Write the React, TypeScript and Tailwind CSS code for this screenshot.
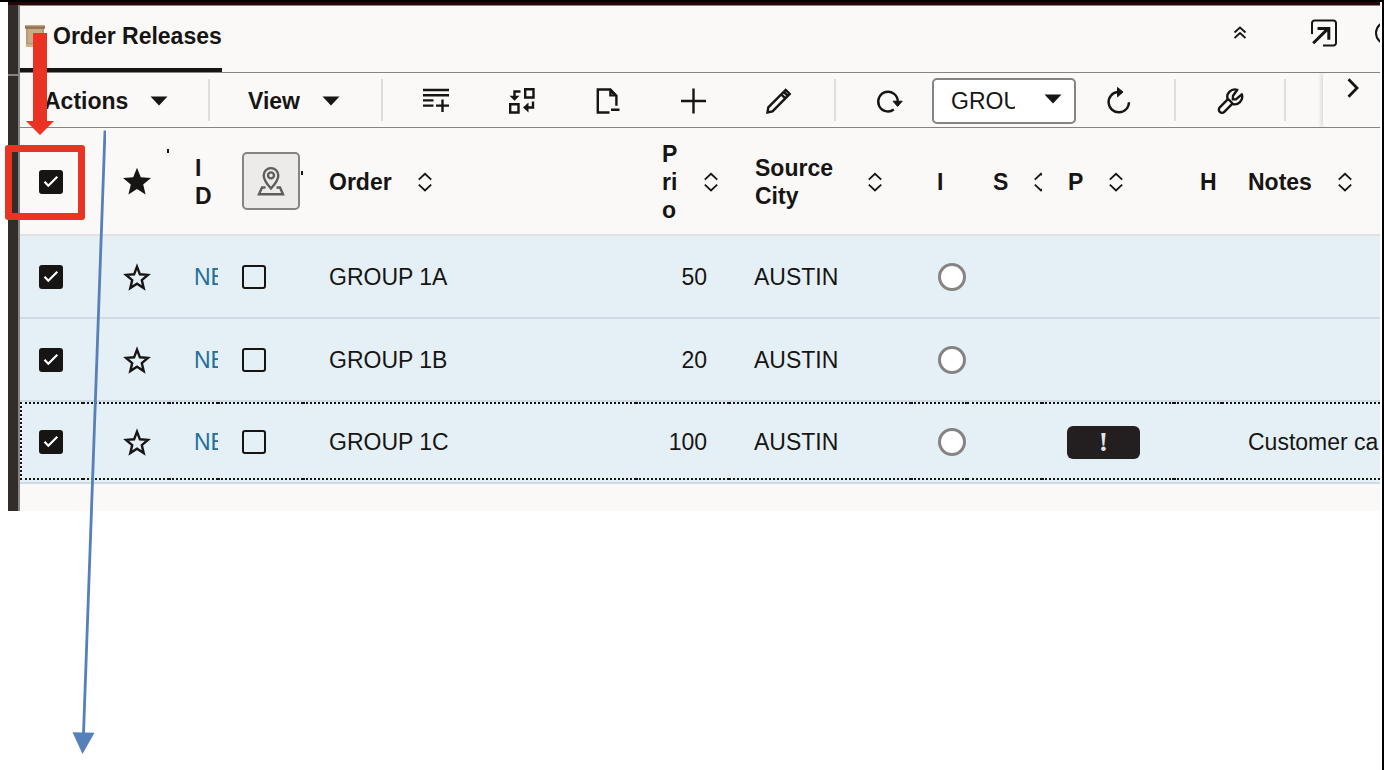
import type { ReactNode } from "react";

const INK = "#161513";

function Check({ label, checked = false }: { label: string; checked?: boolean }) {
  return (
    <label className="inline-grid place-items-center">
      <input
        type="checkbox"
        aria-label={label}
        defaultChecked={checked}
        className="peer col-start-1 row-start-1 size-6 appearance-none rounded-[3px] border-2 border-[#161513] checked:bg-[#161513]"
      />
      <svg
        viewBox="0 0 24 24"
        className="pointer-events-none col-start-1 row-start-1 hidden size-6 peer-checked:block"
        fill="none"
        stroke="#fff"
        strokeWidth="2.2"
      >
        <path d="M5.500 11.800l3.800 3.900 9-8.900" />
      </svg>
    </label>
  );
}

const STAR =
  "M14 .8l3.8 9.5 10.2.8-7.8 6.5 2.4 9.9-8.6-5.4-8.6 5.4 2.4-9.9L0 11.1l10.2-.8z";

function StarFilled() {
  return (
    <svg viewBox="0 0 28 28" className="size-7" fill={INK}>
      <path d={STAR} />
    </svg>
  );
}

function StarOutline() {
  return (
    <svg viewBox="0 0 28 28" className="size-7" fill="none" stroke={INK} strokeWidth="2.4">
      <path d="M14 3.600l2.900 7.700 8 .600-6.100 5.200 1.900 8-6.700-4.300-6.700 4.300 1.900-8-6.100-5.200 8-.600z" />
    </svg>
  );
}

function Sort() {
  return (
    <svg viewBox="0 0 14 20" className="h-5 w-[14px] shrink-0" fill="none" stroke={INK} strokeWidth="1.8">
      <path d="M.8 7.600L7 1.800l6.200 5.800M.8 12.600L7 18.400l6.200-5.800" />
    </svg>
  );
}

function Caret() {
  return (
    <svg viewBox="0 0 18 10" className="h-[10px] w-[18px]" fill={INK}>
      <path d="M.5.5h17L9 9.500z" />
    </svg>
  );
}

function Icon({ children, width = 2.4 }: { children: ReactNode; width?: number }) {
  return (
    <svg viewBox="0 0 28 28" className="size-7" fill="none" stroke={INK} strokeWidth={width}>
      {children}
    </svg>
  );
}

function ToolButton({ label, children }: { label: string; children: ReactNode }) {
  return (
    <button aria-label={label} className="flex h-full w-[86px] items-center justify-center">
      {children}
    </button>
  );
}

function Group({ className, children }: { className: string; children: ReactNode }) {
  return (
    <div className={`flex h-[42px] shrink-0 items-center border-r-2 border-[#e0dedc] ${className}`}>
      {children}
    </div>
  );
}

function Head({ text, box = "", sort = false }: { text: string; box?: string; sort?: boolean }) {
  return (
    <th scope="col" className="border-b-2 border-[#e3e1df] p-0 text-left font-bold">
      <div className="flex items-center gap-[26px] overflow-hidden pt-[1px] pl-[26px]">
        <span className={`shrink-0 leading-7 ${box}`}>{text}</span>
        {sort && <Sort />}
      </div>
    </th>
  );
}

function Cell({
  focused,
  first = false,
  className = "",
  children,
}: {
  focused: boolean;
  first?: boolean;
  className?: string;
  children?: ReactNode;
}) {
  const focus = focused
    ? `h-[78px] mb-[2px] border-y-2 border-dotted border-[#161513] pt-[2px] ${first ? "border-l-2" : ""}`
    : "h-[81px]";
  return (
    <td className="border-b-2 border-[#cfdae2] p-0 align-top">
      <div className={`flex items-center overflow-hidden whitespace-nowrap ${focus} ${className}`}>
        {children}
      </div>
    </td>
  );
}

const rows = [
  { order: "GROUP 1A", priority: 50, city: "AUSTIN", alert: false, notes: "" },
  { order: "GROUP 1B", priority: 20, city: "AUSTIN", alert: false, notes: "" },
  { order: "GROUP 1C", priority: 100, city: "AUSTIN", alert: true, notes: "Customer ca" },
];

function Toolbar() {
  return (
    <div
      role="toolbar"
      className="flex h-[55px] items-center overflow-hidden border-b border-[#868482]"
    >
      <Group className="w-[190px] pt-[2px] pl-6">
        <button className="flex items-center gap-[22px] font-bold">
          Actions <Caret />
        </button>
      </Group>
      <Group className="w-[173px] pt-[2px] pl-[38px]">
        <button className="flex items-center gap-[22px] font-bold">
          View <Caret />
        </button>
      </Group>
      <Group className="w-[453px] pt-[2px] pl-[10px]">
        <ToolButton label="Add row">
          <Icon>
            <path d="M1 3h26M1 8.200h26M1 13.400h10.500M1 18.600h10.500M14 18.600h13M20.500 12.400v12.500" />
          </Icon>
        </ToolButton>
        <ToolButton label="Swap values">
          <Icon>
            <path d="M17.200 2.200h8.300v8.300h-8.300zM2.200 17.200h8.300v8.300H2.200zM12.500 4.500H6.500v6" />
            <path d="M1.500 8.800h10l-5 5zM20.500 15.500v10l-5.500-5z" fill={INK} stroke="none" />
            <path d="M25 14.500v6h-6" />
          </Icon>
        </ToolButton>
        <ToolButton label="Remove page">
          <Icon>
            <path d="M15.500 25.500H3.800V2.500h12.600l6 6.200v10M17 22.800h8.500" />
            <path d="M15.200 1.500l8 8h-8zM17.600 6.300v1.200h1.300z" fill={INK} fillRule="evenodd" stroke="none" />
          </Icon>
        </ToolButton>
        <ToolButton label="New">
          <Icon>
            <path d="M13.500 1.500v25M1 14h25" />
          </Icon>
        </ToolButton>
        <ToolButton label="Edit">
          <Icon>
            <path d="M1.500 25.500l.8-5.200L19.700 2.900l4 4L6.500 24.300zM15.300 7.300l4 4M17.700 4.900l4 4" />
          </Icon>
        </ToolButton>
      </Group>
      <Group className="w-[340px] pt-[2px] pl-[10px]">
        <ToolButton label="Refresh">
          <Icon>
            <path d="M18.800 22.500A9.800 9.800 0 1 1 22.800 14.500v1" />
            <path d="M18 14.200h9.200l-4.600 5.200z" fill={INK} strokeWidth="1" />
          </Icon>
        </ToolButton>
        <div className="grid h-[46px] w-36 shrink-0 items-center">
          <select
            aria-label="Saved query"
            className="col-start-1 row-start-1 h-full w-full appearance-none rounded-[5px] border-2 border-[#868482] bg-white pr-[59px] pl-[17px]"
          >
            <option>GROUP</option>
          </select>
          <span className="pointer-events-none col-start-1 row-start-1 mr-[14px] mb-1 flex justify-self-end">
            <Caret />
          </span>
        </div>
        <ToolButton label="Reload">
          <Icon>
            <path d="M24 15.200A10.200 10.200 0 1 1 12.500 5h3" />
            <path d="M12.500.500l5.500 4.500-5.500 4.800z" fill={INK} strokeWidth="1" />
          </Icon>
        </ToolButton>
      </Group>
      <Group className="w-[110px] pt-[2px] pl-3">
        <ToolButton label="Settings">
          <Icon>
            <path
              strokeLinejoin="round"
              d="M20.300 2.800A7.600 7.600 0 0 0 10.700 12.400L2.800 20.300a3.100 3.100 0 0 0 4.500 4.500l7.900-7.900A7.600 7.600 0 0 0 24.800 7.300l-5.600 4.900-3.400.200.200-3.600zM11.200 12l4.400 4.500"
            />
          </Icon>
        </ToolButton>
      </Group>
      <div className="ml-auto h-full w-[57px] shrink-0 bg-[#fbf9f8] shadow-[-2px_0_4px_#00000020]">
        <button aria-label="More tools" className="flex h-[30px] w-full items-center justify-center pl-[3px]">
          <svg viewBox="0 0 14 20" className="h-5 w-[14px]" fill="none" stroke={INK} strokeWidth="2.800">
            <path d="M2.500 1.300L11 10l-8.500 8.700" />
          </svg>
        </button>
      </div>
    </div>
  );
}

function Header() {
  return (
    <header className="flex h-[67px] items-stretch overflow-hidden border-b border-[#868482]">
      <h1 className="flex items-center gap-2 border-b-4 border-[#161513] pb-[3px] pl-[5px] text-[23px] font-bold">
        <svg viewBox="0 0 20 24" className="h-6 w-5">
          <path d="M1 2h18v20H1z" fill="#b99a76" />
          <path d="M3 5h14v14H3z" fill="#c8ab87" />
          <path d="M0 1.500h20v3.200H0z" fill="#8b7054" />
          <path d="M.5 1h19v1.500H.5z" fill="#c4a57f" />
          <path d="M1 20.300h18v2.700H1z" fill="#cdb28e" />
        </svg>
        <span>Order Releases</span>
      </h1>
      <div className="mb-3 ml-auto flex items-center">
        <button aria-label="Collapse" className="flex w-6 justify-center">
          <svg viewBox="0 0 14 14" className="size-[14px]" fill="none" stroke={INK} strokeWidth="1.700">
            <path d="M1.500 6.500L7 1.500l5.500 5M1.500 12l5.500-5 5.500 5" />
          </svg>
        </button>
        <button aria-label="Open in new window" className="ml-[58px]">
          <Icon width={2}>
            <path d="M2 15V4a2.500 2.500 0 0 1 2.500-2.500h19A2.500 2.500 0 0 1 26 4v20a2.500 2.500 0 0 1-2.500 2.500H13" />
            <path d="M3.200 24.300L18 9.600M7.500 9.400h11.300v11.300" strokeWidth="3" />
          </Icon>
        </button>
        <button aria-label="Help" className="ml-[37px] w-[5px] overflow-hidden">
          <svg viewBox="0 0 24 24" className="size-6 max-w-none" fill="none" stroke={INK} strokeWidth="2">
            <circle cx="12" cy="12" r="11" />
          </svg>
        </button>
      </div>
    </header>
  );
}

function Releases() {
  return (
    <table className="w-full table-fixed border-separate border-spacing-0">
      <colgroup>
        <col className="w-[63px]" />
        <col className="w-[86px]" />
        <col className="w-[49px]" />
        <col className="w-[85px]" />
        <col className="w-[333px]" />
        <col className="w-[93px]" />
        <col className="w-[182px]" />
        <col className="w-[56px]" />
        <col className="w-[75px]" />
        <col className="w-[132px]" />
        <col className="w-[48px]" />
        <col />
      </colgroup>
      <thead>
        <tr className="h-[108px]">
          <th className="border-b-2 border-[#e3e1df] p-0">
            <div className="flex pt-[1px] pl-[19px]">
              <Check label="Select all" checked />
            </div>
          </th>
          <th className="relative border-b-2 border-[#e3e1df] p-0">
            <div className="flex pl-10">
              <StarFilled />
            </div>
            <span className="absolute top-[21px] right-0 h-1 w-[2px] bg-[#161513]" />
          </th>
          <Head text="ID" box="w-[18px] break-all" />
          <th className="relative border-b-2 border-[#e3e1df] p-0">
            <button
              aria-label="Show on map"
              className="ml-6 flex size-[58px] items-center justify-center rounded-[5px] border-2 border-[#868482] bg-[#edebea]"
            >
              <svg viewBox="0 0 28 30" className="h-[30px] w-7" fill="none" stroke="#5f5d5b" strokeWidth="2.400">
                <path d="M14 22.500C9.500 17.500 6.700 13.500 6.700 9.400a7.300 7.300 0 0 1 14.600 0c0 4.100-2.800 8.100-7.300 13.100z" />
                <circle cx="14" cy="9.400" r="3" />
                <path d="M8.500 21.500H5L2 28.200h24l-3-6.700h-3.500" />
              </svg>
            </button>
            <span className="absolute top-[43px] right-0 h-1 w-[2px] bg-[#161513]" />
          </th>
          <Head text="Order" sort />
          <Head text="Prio" box="w-4 break-all" sort />
          <Head text="Source City" box="w-[87px]" sort />
          <Head text="I" />
          <Head text="S" sort />
          <Head text="P" sort />
          <Head text="H" />
          <Head text="Notes" sort />
        </tr>
      </thead>
      <tbody className="bg-[#e5f0f6]">
        {rows.map((row, i) => {
          const focused = i === rows.length - 1;
          return (
            <tr key={row.order}>
              <Cell focused={focused} first className={focused ? "pl-[17px]" : "pl-[19px]"}>
                <Check label={`Select ${row.order}`} checked />
              </Cell>
              <Cell focused={focused} className="pl-10">
                <button aria-label={`Favourite ${row.order}`}>
                  <StarOutline />
                </button>
              </Cell>
              <Cell focused={focused} className="pl-[25px] text-[#227099]">
                <a href="#release">NE</a>
              </Cell>
              <Cell focused={focused} className="pl-6">
                <Check label={`Map ${row.order}`} />
              </Cell>
              <Cell focused={focused} className="pl-[26px]">{row.order}</Cell>
              <Cell focused={focused} className="justify-end pr-[22px]">{row.priority}</Cell>
              <Cell focused={focused} className="pl-[25px]">{row.city}</Cell>
              <Cell focused={focused} className="pl-[27px]">
                <span className="size-7 rounded-full border-3 border-[#868482] bg-white" />
              </Cell>
              <Cell focused={focused} />
              <Cell focused={focused} className="pl-[25px]">
                {row.alert && (
                  <span className="flex h-[33px] w-[73px] items-center justify-center rounded-md bg-[#231f20] font-['Liberation_Serif'] text-[28px] leading-none font-bold text-[#e6e6e6]">
                    !
                  </span>
                )}
              </Cell>
              <Cell focused={focused} />
              <Cell focused={focused} className="pl-[26px]">{row.notes}</Cell>
            </tr>
          );
        })}
      </tbody>
    </table>
  );
}

function Callouts() {
  return (
    <>
      <svg
        viewBox="0 0 28 102"
        className="pointer-events-none absolute top-[31px] left-[26px] h-[102px] w-7"
        fill="#eb3323"
      >
        <path d="M7 0h14v88h7L14 102 0 88h7z" />
      </svg>
      <div className="pointer-events-none absolute top-[143px] left-[5px] h-[75px] w-20 rounded-[3px] border-7 border-[#eb3323]" />
      <svg
        viewBox="0 0 34 624"
        className="pointer-events-none absolute top-32 left-[72px] h-[624px] w-[34px]"
        fill="#5680b9"
      >
        <path d="M33 .5L11.500 604" stroke="#5680b9" strokeWidth="2.800" />
        <path d="M.5 602.300l22 .400L10.500 624z" />
      </svg>
    </>
  );
}

export default function App() {
  return (
    <div className="relative min-h-screen overflow-hidden border-t-2 border-r-2 border-black bg-white pr-[2px] pl-2 font-['Liberation_Sans',Arial,sans-serif] text-[23px] leading-7 text-[#161513]">
      <div className="border-t-3 border-[#2a0505]">
        <div className="flex">
          <div className="w-3 shrink-0 border-r-2 border-[#868482] bg-[#322d29] pt-[69px]">
            <div className="h-[2px] bg-[#868482]" />
          </div>
          <main className="min-w-0 flex-1 border-t border-[#868482] bg-[#fbf9f8] pb-[27px]">
            <Header />
            <Toolbar />
            <Releases />
          </main>
        </div>
      </div>
      <Callouts />
    </div>
  );
}
